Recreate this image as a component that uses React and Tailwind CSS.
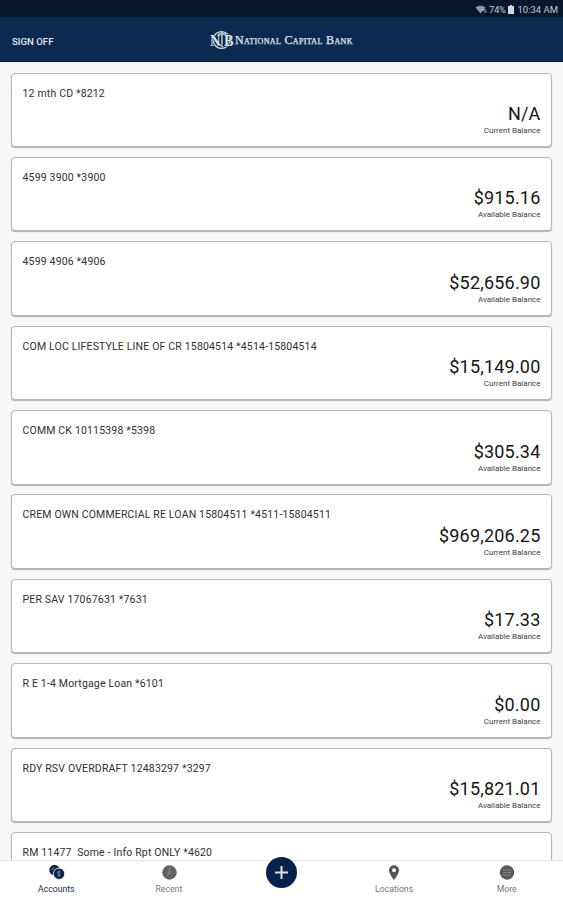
const accounts = [
  { name: "12 mth CD *8212", amount: "N/A", label: "Current Balance" },
  { name: "4599 3900 *3900", amount: "$915.16", label: "Available Balance" },
  { name: "4599 4906 *4906", amount: "$52,656.90", label: "Available Balance" },
  { name: "COM LOC LIFESTYLE LINE OF CR 15804514 *4514-15804514", amount: "$15,149.00", label: "Current Balance" },
  { name: "COMM CK 10115398 *5398", amount: "$305.34", label: "Available Balance" },
  { name: "CREM OWN COMMERCIAL RE LOAN 15804511 *4511-15804511", amount: "$969,206.25", label: "Current Balance" },
  { name: "PER SAV 17067631 *7631", amount: "$17.33", label: "Available Balance" },
  { name: "R E 1-4 Mortgage Loan *6101", amount: "$0.00", label: "Current Balance" },
  { name: "RDY RSV OVERDRAFT 12483297 *3297", amount: "$15,821.01", label: "Available Balance" },
  { name: "RM 11477  Some - Info Rpt ONLY *4620", amount: "", label: "" },
];

function StatusBar() {
  return (
    <div className="flex h-[17px] shrink-0 items-center justify-end bg-[#08172d] pr-[5px] pt-[2px] text-[9.5px] leading-none text-[#c3cad3]">
      <svg width="12" height="9" viewBox="0 0 12 9" className="mr-[2px]">
        <path d="M0.5 2.6C3.4.2 7.6.2 10.5 2.6L5.5 8.5z" fill="#8d98a8" />
        <path d="M6.8 4.8h4M9 6.8h2.5" stroke="#c3cad3" strokeWidth="1" />
      </svg>
      <span className="tracking-[-0.4px]">74%</span>
      <svg width="6" height="9" viewBox="0 0 6 9" className="ml-[3px] mr-[3px]">
        <path d="M2 0h2v1h2v8H0V1h2z" fill="#d5dae0" />
      </svg>
      <span>10:34 AM</span>
    </div>
  );
}

function Logo() {
  return (
    <div className="flex items-center pt-[2px] text-[#e3e9f0]">
      <svg width="25" height="20" viewBox="0 0 25 20" fill="none">
        <circle cx="12.500" cy="10" r="8.4" stroke="#dbe3ec" strokeWidth="1.3" />
        <g fill="#dbe3ec" stroke="#0c2950" strokeWidth="0.8" paintOrder="stroke" fontFamily="Liberation Serif, serif" fontWeight="700">
          <text x="1" y="15.5" fontSize="16" textLength="10.5" lengthAdjust="spacingAndGlyphs">N</text>
          <text x="15" y="15.5" fontSize="16" textLength="9.5" lengthAdjust="spacingAndGlyphs">B</text>
        </g>
        <path d="M13 2v12.500M9 4.400c2.500-1 5.500-1 8 0M10 14l4 3" stroke="#dbe3ec" strokeWidth="1.3" />
      </svg>
      <span className="ml-[1px] w-[119px] whitespace-nowrap font-['Liberation_Serif',serif] text-[12px] leading-none tracking-[0.35px] [-webkit-text-stroke:0.25px] [font-variant:small-caps]">
        National Capital Bank
      </span>
    </div>
  );
}

function AccountCard({ name, amount, label }) {
  return (
    <div className="flex h-[74.5px] shrink-0 flex-col justify-between rounded-[4px] border-[1.5px] border-[#b4b7b9] bg-white px-[10.5px] pb-[11px] pt-[14px] shadow-[0_1px_1px_#aeb1b3]">
      <div className="whitespace-pre text-[10.5px] leading-[12px] tracking-[0.17px] text-[#303030]">{name}</div>
      <div className="text-right">
        <div className="text-[18px] leading-[20px] tracking-[0.2px] text-[#151515]">{amount}</div>
        <div className="mt-[2px] text-[8px] leading-[9px] text-[#404040]">{label}</div>
      </div>
    </div>
  );
}

function NavItem({ label, active, children }) {
  return (
    <div className={`flex flex-1 flex-col items-center pt-[2px] ${active ? "text-[#172c50]" : "text-[#777]"}`}>
      <svg width="18" height="18" viewBox="0 0 18 18" fill="none">
        {children}
      </svg>
      <span className="mt-[3px] text-[8.7px] leading-[10px]">{label}</span>
    </div>
  );
}

function BottomNav() {
  return (
    <nav className="flex h-[40px] shrink-0 border-t border-[#e4e4e4] bg-white">
      <NavItem label="Accounts" active>
        <circle cx="7.5" cy="7" r="5.2" fill="#102449" />
        <circle cx="12" cy="10.8" r="5.7" fill="#102449" stroke="#fff" strokeWidth="0.8" />
        <path d="M13.5 9c-2.8-1.2-4 .9-1.6 1.6 2.6.7 1.5 3-1.4 1.8M12 7.8v6M4.5 6.7l3-2" stroke="#8b99b0" strokeWidth="0.9" />
      </NavItem>
      <NavItem label="Recent">
        <circle cx="9.5" cy="9.5" r="7.2" fill="#626262" />
        <path d="M9.5 5v5L7.3 12" stroke="#909090" strokeWidth="1.1" />
      </NavItem>
      <div className="flex flex-1 justify-center">
        <div className="-mt-[4px] flex size-[31px] items-center justify-center rounded-full bg-[#07214a]">
          <svg width="13" height="13" viewBox="0 0 13 13">
            <path d="M6.5 0v13M0 6.5h13" stroke="#dce2e9" strokeWidth="2" />
          </svg>
        </div>
      </div>
      <NavItem label="Locations">
        <path d="M9 2.3a5 5 0 0 0-5 5C4 11 9 17 9 17s5-6 5-9.7a5 5 0 0 0-5-5zm0 3a2 2 0 1 1 0 4 2 2 0 0 1 0-4z" fill="#555" fillRule="evenodd" />
      </NavItem>
      <NavItem label="More">
        <circle cx="9" cy="9.5" r="7.2" fill="#595959" />
        <path d="M5 7h8M5 9.5h8M5 12h8" stroke="#858585" strokeWidth="1.2" />
      </NavItem>
    </nav>
  );
}

export default function App() {
  return (
    <div className="flex h-[900px] w-[563px] flex-col overflow-hidden bg-[#f8f8f9] font-['Roboto',sans-serif]">
      <StatusBar />
      <header className="grid h-[45px] shrink-0 grid-cols-[1fr_auto_1fr] items-center border-b border-[#090b38] bg-[#0c2950]">
        <span className="pl-[12px] pt-[5px] text-[9.6px] font-medium leading-none text-[#e0e6ed]">SIGN OFF</span>
        <Logo />
      </header>
      <main className="flex min-h-0 flex-1 flex-col gap-[9.9px] overflow-hidden px-[11px] pt-[10.5px]">
        {accounts.map((account) => (
          <AccountCard key={account.name} {...account} />
        ))}
      </main>
      <BottomNav />
    </div>
  );
}
